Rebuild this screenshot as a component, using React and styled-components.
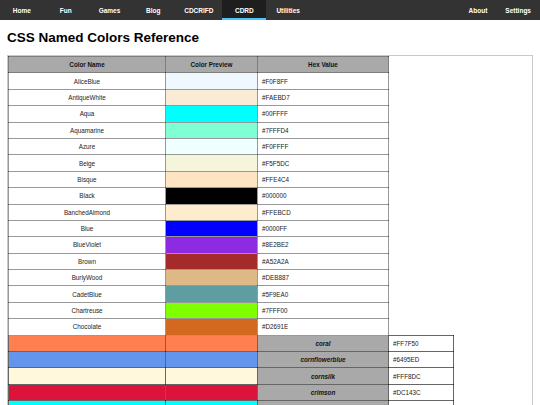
import React from 'react';
import styled, { createGlobalStyle } from 'styled-components';

const GlobalStyle = createGlobalStyle`
  html, body {
    margin: 0;
    padding: 0;
    background: #fff;
    font-family: "Liberation Sans", Arial, sans-serif;
    color: #111;
  }
`;

const leftTabs = ['Home', 'Fun', 'Games', 'Blog', 'CDCRIFD', 'CDRD', 'Utilities'];
const rightTabs = ['About', 'Settings'];

const namedColors = [
  ['AliceBlue', '#F0F8FF'],
  ['AntiqueWhite', '#FAEBD7'],
  ['Aqua', '#00FFFF'],
  ['Aquamarine', '#7FFFD4'],
  ['Azure', '#F0FFFF'],
  ['Beige', '#F5F5DC'],
  ['Bisque', '#FFE4C4'],
  ['Black', '#000000'],
  ['BanchedAlmond', '#FFEBCD'],
  ['Blue', '#0000FF'],
  ['BlueViolet', '#8E2BE2'],
  ['Brown', '#A52A2A'],
  ['BurlyWood', '#DEB887'],
  ['CadetBlue', '#5F9EA0'],
  ['Chartreuse', '#7FFF00'],
  ['Chocolate', '#D2691E'],
];

// rows below chocolate come out with their cells shifted
const brokenColors = [
  ['coral', '#FF7F50'],
  ['cornflowerblue', '#6495ED'],
  ['cornsilk', '#FFF8DC'],
  ['crimson', '#DC143C'],
  ['cyan', '#00FFFF'],
];

const App = () => {
  return (
    <>
      <GlobalStyle />
      <NavBar>
        <NavGroup>
          {leftTabs.map((t) => (
            <NavItem key={t} $active={t === 'CDRD'} $wide>
              {t}
            </NavItem>
          ))}
        </NavGroup>
        <NavGroup>
          {rightTabs.map((t) => (
            <NavItem key={t}>{t}</NavItem>
          ))}
        </NavGroup>
      </NavBar>
      <Page>
        <Title>CSS Named Colors Reference</Title>
        <TableFrame>
          <ColorTable>
            <colgroup>
              <col style={{ width: 157 }} />
              <col style={{ width: 92 }} />
              <col style={{ width: 131 }} />
              <col style={{ width: 65 }} />
            </colgroup>
            <thead>
              <Row>
                <HeadCell>Color Name</HeadCell>
                <HeadCell>Color Preview</HeadCell>
                <HeadCell>Hex Value</HeadCell>
              </Row>
            </thead>
            <tbody>
              {namedColors.map(([name, hex]) => (
                <Row key={name}>
                  <NameCell>{name}</NameCell>
                  <SwatchCell style={{ background: hex }} />
                  <HexCell>{hex}</HexCell>
                </Row>
              ))}
              {brokenColors.map(([name, hex]) => (
                <Row key={name}>
                  <SwatchCell $dark style={{ background: name }} />
                  <SwatchCell $dark style={{ background: name }} />
                  <LabelCell>{name}</LabelCell>
                  <HexCell $dark>{hex}</HexCell>
                </Row>
              ))}
            </tbody>
          </ColorTable>
        </TableFrame>
      </Page>
    </>
  );
};

export default App;

const NavBar = styled.nav`
  height: 20px;
  background-color: #333;
  display: flex;
  justify-content: space-between;
`;

const NavGroup = styled.div`
  display: flex;
`;

const NavItem = styled.div`
  box-sizing: border-box;
  min-width: ${(p) => (p.$wide ? '43.8px' : '0')};
  padding: 2px 9px 0;
  height: 20px;
  display: flex;
  align-items: center;
  justify-content: center;
  color: #fff;
  font-size: 6.5px;
  font-weight: bold;
  background-color: ${(p) => (p.$active ? '#1e1e1e' : 'transparent')};
  border-bottom: 2px solid ${(p) => (p.$active ? '#4fc3f7' : 'transparent')};
`;

const Page = styled.main`
  padding: 0 7px;
`;

const Title = styled.h1`
  margin: 10px 0 9px;
  font-size: 13.5px;
  line-height: 16px;
  font-weight: bold;
  color: #000;
`;

const TableFrame = styled.div`
  width: 526px;
  box-sizing: border-box;
  border: 1px solid #c8c8c8;
`;

const ColorTable = styled.table`
  table-layout: fixed;
  border-collapse: collapse;
  width: 445px;
  font-size: 6.3px;
`;

const Row = styled.tr`
  height: 16.4px;
`;

const cellBase = `
  padding: 0 4px;
  vertical-align: middle;
  overflow: hidden;
  white-space: nowrap;
`;

const HeadCell = styled.th`
  ${cellBase}
  background-color: #a9a9a9;
  border: 1px solid rgba(0, 0, 0, 0.5);
  font-weight: bold;
  text-align: center;
  color: #111;
`;

const NameCell = styled.td`
  ${cellBase}
  border: 1px solid rgba(0, 0, 0, 0.4);
  text-align: center;
  color: #222;
`;

const SwatchCell = styled.td`
  ${cellBase}
  border: 1px solid ${(p) => (p.$dark ? 'rgba(0, 0, 0, 0.6)' : 'rgba(0, 0, 0, 0.4)')};
`;

const HexCell = styled.td`
  ${cellBase}
  border: 1px solid ${(p) => (p.$dark ? 'rgba(0, 0, 0, 0.6)' : 'rgba(0, 0, 0, 0.4)')};
  text-align: left;
  color: #222;
`;

const LabelCell = styled.td`
  ${cellBase}
  background-color: #a9a9a9;
  border: 1px solid rgba(0, 0, 0, 0.6);
  text-align: center;
  font-weight: bold;
  font-style: italic;
  color: #111;
`;
